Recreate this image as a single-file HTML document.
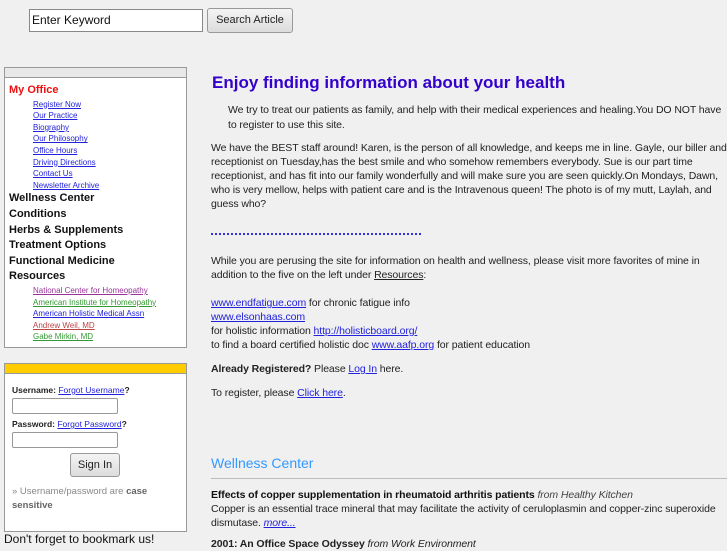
<!DOCTYPE html>
<html><head><style>
body{margin:0;width:727px;height:545px;overflow:hidden;background:#f0f0f0;font-family:"Liberation Sans",sans-serif;color:#222;position:relative}
.a{position:absolute;white-space:nowrap}
a{color:#2222dd;text-decoration:underline}
.sm a{font-size:8px;display:block;height:11.6px;line-height:11.6px}
.cat{font-size:11px;font-weight:bold;color:#111;height:15.6px;line-height:15.6px}
.t{font-size:10.5px;line-height:14px;color:#222;letter-spacing:-0.1px}
</style></head><body>
<div class="a" style="left:29px;top:9px;width:170px;height:21px;background:#fff;border:1px solid #888;font-size:12px;line-height:21px;padding-left:2px;color:#111">Enter Keyword</div>
<div class="a" style="left:207px;top:8px;width:84px;height:23px;border:1px solid #999;border-radius:3px;background:linear-gradient(#f4f4f4,#dcdcdc);font-size:11px;line-height:23px;text-align:center;color:#222">Search Article</div>

<div class="a" style="left:4px;top:67px;width:181px;height:279px;border:1px solid #999;background:#fff">
<div style="height:9px;background:#e8e8e8;border-bottom:1px solid #999"></div>
<div style="padding-left:4px">
<div class="cat" style="color:#ee1111;margin-top:5px">My Office</div>
<div class="sm" style="padding-left:24px"><a>Register Now</a><a>Our Practice</a><a>Biography</a><a>Our Philosophy</a><a>Office Hours</a><a>Driving Directions</a><a>Contact Us</a><a>Newsletter Archive</a></div>
<div class="cat">Wellness Center</div><div class="cat">Conditions</div><div class="cat">Herbs &amp; Supplements</div><div class="cat">Treatment Options</div><div class="cat">Functional Medicine</div><div class="cat">Resources</div>
<div class="sm" style="padding-left:24px"><a style="color:#993399">National Center for Homeopathy</a><a style="color:#339933">American Institute for Homeopathy</a><a>American Holistic Medical Assn</a><a style="color:#bb4444">Andrew Weil, MD</a><a style="color:#339933">Gabe Mirkin, MD</a></div>
</div></div>

<div class="a" style="left:4px;top:363px;width:181px;height:167px;border:1px solid #999;background:#fff;font-size:8.5px">
<div style="height:9px;background:#ffcc00;border-bottom:1px solid #999"></div>
<div style="position:absolute;left:7px;top:21px;font-weight:bold">Username: <a style="font-weight:normal">Forgot Username</a>?</div>
<div style="position:absolute;left:7px;top:34px;width:104px;height:14px;border:1px solid #999;border-radius:2px;background:#fff"></div>
<div style="position:absolute;left:7px;top:55px;font-weight:bold">Password: <a style="font-weight:normal">Forgot Password</a>?</div>
<div style="position:absolute;left:7px;top:68px;width:104px;height:14px;border:1px solid #999;border-radius:2px;background:#fff"></div>
<div style="position:absolute;left:65px;top:89px;width:48px;height:22px;border:1px solid #999;border-radius:3px;background:linear-gradient(#f4f4f4,#dcdcdc);font-size:11px;line-height:22px;text-align:center">Sign In</div>
<div style="position:absolute;left:7px;top:121px;color:#888;font-size:9.5px;line-height:14px;white-space:normal;width:140px">» Username/password are <b style="color:#666">case sensitive</b></div>
</div>
<div class="a" style="left:4px;top:532px;font-size:12px;color:#111">Don't forget to bookmark us!</div>

<div class="a" style="left:212px;top:73px;font-size:17px;font-weight:bold;color:#3300cc">Enjoy finding information about your health</div>
<div class="a t" style="left:228px;top:103px;white-space:normal;width:500px;line-height:15px">We try to treat our patients as family, and help with their medical experiences and healing.You DO NOT have to register to use this site.</div>
<div class="a t" style="left:211px;top:141px;white-space:normal;width:516px">We have the BEST staff around! Karen, is the person of all knowledge, and keeps me in line. Gayle, our biller and receptionist on Tuesday,has the best smile and who somehow remembers everybody. Sue is our part time receptionist, and has fit into our family wonderfully and will make sure you are seen quickly.On Mondays, Dawn, who is very mellow, helps with patient care and is the Intravenous queen! The photo is of my mutt, Laylah, and guess who?</div>
<div class="a" style="left:211px;top:233px;width:210px;border-top:2px dotted #3333dd"></div>
<div class="a t" style="left:211px;top:254px;white-space:normal;width:510px">While you are perusing the site for information on health and wellness, please visit more favorites of mine in addition to the five on the left under <u>Resources</u>:</div>
<div class="a t" style="left:211px;top:296px"><a>www.endfatigue.com</a> for chronic fatigue info<br><a>www.elsonhaas.com</a><br>for holistic information <a>http://holisticboard.org/ </a><br>to find a board certified holistic doc <a>www.aafp.org</a> for patient education</div>
<div class="a t" style="left:211px;top:362px"><b>Already Registered?</b> Please <a>Log In</a> here.</div>
<div class="a t" style="left:211px;top:386px">To register, please <a>Click here</a>.</div>
<div class="a" style="left:211px;top:455px;font-size:14px;color:#3399ff">Wellness Center</div>
<div class="a" style="left:211px;top:478px;width:516px;border-top:1px solid #bbb"></div>
<div class="a t" style="left:211px;top:488px;white-space:normal;width:516px"><b style="color:#111">Effects of copper supplementation in rheumatoid arthritis patients</b> <i style="color:#444">from Healthy Kitchen</i><br>Copper is an essential trace mineral that may facilitate the activity of ceruloplasmin and copper-zinc superoxide dismutase. <a><i>more...</i></a></div>
<div class="a t" style="left:211px;top:537px"><b>2001: An Office Space Odyssey</b> <i>from Work Environment</i></div>
</body></html>
